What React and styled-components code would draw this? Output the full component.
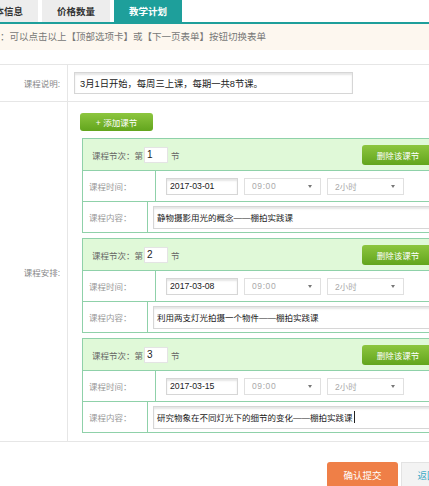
import React from 'react';
import styled, { createGlobalStyle } from 'styled-components';

const GlobalStyle = createGlobalStyle`
  html, body {
    margin: 0;
    padding: 0;
    background: #fff;
    overflow: hidden;
  }
  body {
    font-family: 'Liberation Sans', 'Noto Sans CJK SC', sans-serif;
    font-size: 8.5px;
    color: #333;
  }
`;

const Page = styled.div`
  width: 600px;
  margin-left: -30px;
`;

const TabBar = styled.div`
  display: flex;
  gap: 4px;
  height: 22px;
  border-bottom: 2px solid #1e9f9b;
`;

const Tab = styled.div`
  width: 68px;
  display: flex;
  align-items: center;
  justify-content: center;
  font-weight: bold;
  font-size: 9.5px;
  background: ${(p) => (p.$active ? '#1e9f9b' : '#ededed')};
  color: ${(p) => (p.$active ? '#fff' : '#333')};
`;

const Hint = styled.div`
  height: 26px;
  line-height: 26px;
  background: #fdf7ef;
  color: #777;
  font-size: 9.5px;
  padding-left: 11px;
  margin-bottom: 14px;
`;

const Form = styled.div`
  border-top: 1px solid #e6e6e6;
`;

const Row = styled.div`
  display: flex;
  border-bottom: 1px solid #e6e6e6;
`;

const Label = styled.div`
  width: 90px;
  padding-right: 7px;
  border-right: 1px solid #e6e6e6;
  display: flex;
  align-items: center;
  justify-content: flex-end;
  color: #888;
`;

const Cell = styled.div`
  flex: 1;
  padding: ${(p) => p.$pad};
`;

const TextBox = styled.div`
  box-sizing: border-box;
  width: ${(p) => p.$w}px;
  height: ${(p) => p.$h}px;
  border: 1px solid #d6d6d6;
  box-shadow: inset 0 2px 2px #e6e6e6;
  display: flex;
  align-items: center;
  padding-left: ${(p) => p.$pl || 5}px;
  font-size: ${(p) => p.$fs || 8.5}px;
  color: #1a1a1a;
  background: #fff;
  white-space: nowrap;
`;

const Caret = styled.span`
  display: inline-block;
  width: 1px;
  height: 12px;
  background: #222;
  margin-left: 1px;
`;

const GreenButton = styled.div`
  box-sizing: border-box;
  width: ${(p) => p.$w}px;
  height: ${(p) => p.$h}px;
  border-radius: 3px;
  background: linear-gradient(#8dc63f, #62a51d);
  color: #fff;
  display: flex;
  align-items: center;
  justify-content: center;
`;

const Lessons = styled.div`
  display: flex;
  flex-direction: column;
  gap: 5px;
  margin: 7px 0 0 2px;
`;

const Block = styled.div`
  width: 370px;
  border: 1px solid #8fd1a9;
`;

const BlockHead = styled.div`
  height: 31px;
  background: #e0f9d8;
  display: flex;
  align-items: center;
  padding: 0 19px 0 9px;
  color: #666;
`;

const NumBox = styled.div`
  box-sizing: border-box;
  width: 24px;
  height: 16px;
  background: #fff;
  border: 1px solid #e4e4e4;
  color: #222;
  padding-left: 2px;
  display: flex;
  align-items: center;
  margin: 0 3px 0 1px;
  font-size: 10px;
`;

const Spacer = styled.div`
  flex: 1;
`;

const LineRow = styled.div`
  display: flex;
  height: 30px;
  border-top: 1px solid #8fd1a9;
`;

const LineLabel = styled.div`
  width: 66px;
  padding-left: 6px;
  border-right: 1px solid #8fd1a9;
  display: flex;
  align-items: center;
  color: #999;
`;

const LineCell = styled.div`
  flex: 1;
  display: flex;
  align-items: center;
  gap: ${(p) => p.$gap || 0}px;
  padding-left: ${(p) => p.$pl}px;
`;

const Select = styled.div`
  box-sizing: border-box;
  width: 77px;
  height: 17px;
  border: 1px solid #e0e0e0;
  display: flex;
  align-items: center;
  justify-content: space-between;
  padding: 0 8px 0 7px;
  color: #aaa;
  letter-spacing: ${(p) => (p.$spaced ? '0.6px' : '0')};
`;

const Arrow = styled.span`
  width: 0;
  height: 0;
  border-left: 2.5px solid transparent;
  border-right: 2.5px solid transparent;
  border-top: 3px solid #777;
`;

const Footer = styled.div`
  display: flex;
  gap: 3px;
  padding: 20px 0 0 357px;
`;

const SubmitButton = styled.div`
  width: 71px;
  height: 26px;
  border-radius: 3px;
  background: #ef7f47;
  color: #fff;
  font-size: 9.5px;
  display: flex;
  align-items: center;
  justify-content: center;
`;

const BackButton = styled.div`
  box-sizing: border-box;
  width: 71px;
  height: 26px;
  border: 1px solid #e3e3e3;
  background: #f3f3f3;
  color: #3aa8c4;
  font-size: 9.5px;
  display: flex;
  align-items: center;
  justify-content: center;
`;

const lessons = [
  { n: 1, date: '2017-03-01', text: '静物摄影用光的概念——棚拍实践课' },
  { n: 2, date: '2017-03-08', text: '利用两支灯光拍摄一个物件——棚拍实践课' },
  { n: 3, date: '2017-03-15', text: '研究物象在不同灯光下的细节的变化——棚拍实践课', caret: true },
];

const Lesson = ({ item }) => (
  <Block>
    <BlockHead>
      <span>课程节次：第</span>
      <NumBox>{item.n}</NumBox>
      <span>节</span>
      <Spacer />
      <GreenButton $w={72} $h={20}>删除该课节</GreenButton>
    </BlockHead>
    <LineRow>
      <LineLabel>课程时间：</LineLabel>
      <LineCell $pl={10} $gap={6}>
        <TextBox $w={72} $h={17} $pl={3} $fs={8.7}>{item.date}</TextBox>
        <Select $spaced>
          09:00
          <Arrow />
        </Select>
        <Select>
          2小时
          <Arrow />
        </Select>
      </LineCell>
    </LineRow>
    <LineRow>
      <LineLabel>课程内容：</LineLabel>
      <LineCell $pl={5}>
        <TextBox $w={300} $h={23} $pl={3}>
          {item.text}
          {item.caret && <Caret />}
        </TextBox>
      </LineCell>
    </LineRow>
  </Block>
);

export default function App() {
  return (
    <>
      <GlobalStyle />
      <Page>
        <TabBar>
          <Tab>基本信息</Tab>
          <Tab>价格数量</Tab>
          <Tab $active>教学计划</Tab>
        </TabBar>
        <Hint>提示：可以点击以上【顶部选项卡】或【下一页表单】按钮切换表单</Hint>
        <Form>
          <Row>
            <Label>课程说明:</Label>
            <Cell $pad="7px 0 7px 6px">
              <TextBox $w={279} $h={22} $fs={9.3}>3月1日开始，每周三上课，每期一共8节课。</TextBox>
            </Cell>
          </Row>
          <Row>
            <Label>课程安排:</Label>
            <Cell $pad="11px 0 8px 12px">
              <GreenButton $w={73} $h={18}>+ 添加课节</GreenButton>
              <Lessons>
                {lessons.map((l) => (
                  <Lesson key={l.n} item={l} />
                ))}
              </Lessons>
            </Cell>
          </Row>
        </Form>
        <Footer>
          <SubmitButton>确认提交</SubmitButton>
          <BackButton>返回修改</BackButton>
        </Footer>
      </Page>
    </>
  );
}
